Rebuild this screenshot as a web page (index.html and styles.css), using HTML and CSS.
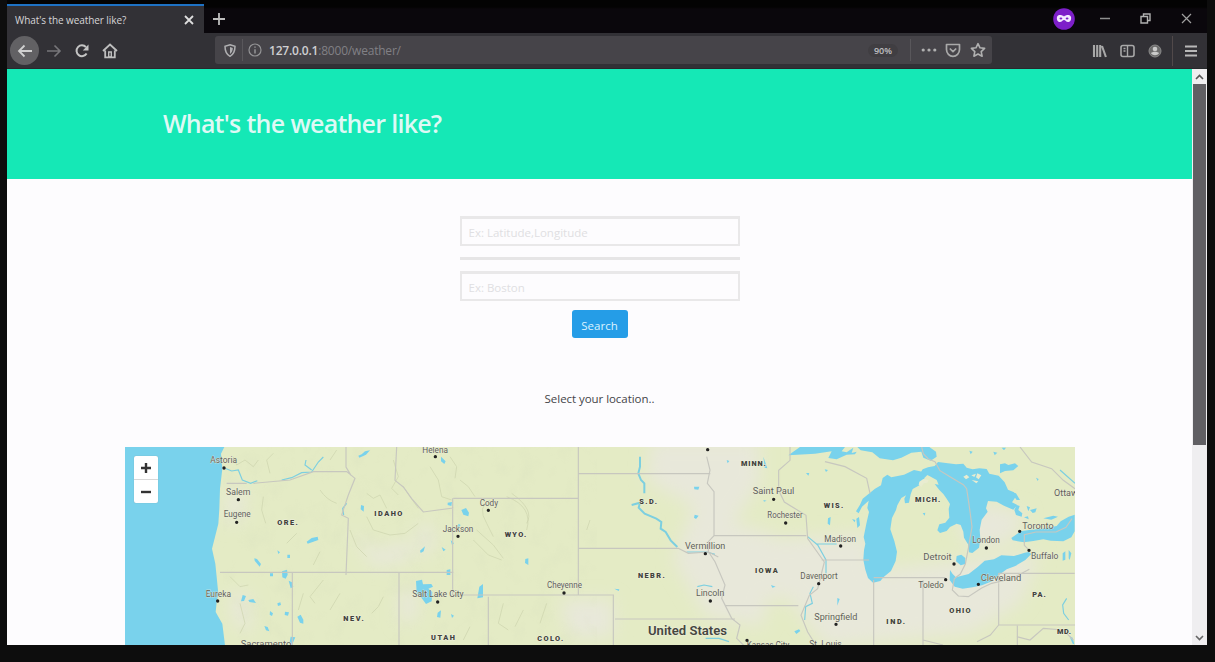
FILE: index.html
```html
<!DOCTYPE html>
<html lang="en">
<head>
<meta charset="utf-8">
<title>What's the weather like?</title>
<link rel="stylesheet" href="styles.css">
</head>
<body>
<div class="browser">
  <div class="tabbar">
    <div class="tab"><span class="tab-title">What's the weather like?</span>
      <svg class="tab-close" width="10" height="10" viewBox="0 0 10 10"><path d="M1 1l8 8M9 1l-8 8" stroke="#dedede" stroke-width="1.8"/></svg>
    </div>
    <svg class="newtab" width="14" height="14" viewBox="0 0 14 14"><path d="M7 1v12M1 7h12" stroke="#bdbdbd" stroke-width="1.8"/></svg>
    <div class="window-controls">
      <svg width="24" height="24" viewBox="0 0 24 24"><circle cx="12" cy="12" r="10.8" fill="#7d1fc9"/><path d="M5 10c1-3 5-2 7-.6 2-1.400 6-2.400 7 .6.600 3-1 5-3 5s-2.500-2-4-2-2 2-4 2-3.600-2-3-5z" fill="#f3eaff"/><ellipse cx="8.900" cy="11.500" rx="1.400" ry="1.100" fill="#7d1fc9"/><ellipse cx="15.100" cy="11.500" rx="1.400" ry="1.100" fill="#7d1fc9"/></svg>
      <svg class="win-min" width="10" height="10" viewBox="0 0 10 10"><path d="M0 4.500h10" stroke="#8f8f8f" stroke-width="1.500"/></svg>
      <svg class="win-max" width="11" height="11" viewBox="0 0 11 11"><path d="M1 3.500h6.500V10H1zM3.500 3V1H10v6.500H8" fill="none" stroke="#b0b0b0" stroke-width="1.400"/></svg>
      <svg class="win-close" width="11" height="11" viewBox="0 0 11 11"><path d="M1 1l9 9M10 1l-9 9" stroke="#a0a0a0" stroke-width="1.200"/></svg>
    </div>
  </div>
  <div class="toolbar">
    <div class="nav">
      <span class="back"><svg width="16" height="14" viewBox="0 0 16 14"><path d="M15 7H2M7.500 1.500L2 7l5.500 5.500" fill="none" stroke="#d0d0d0" stroke-width="1.800"/></svg></span>
      <svg class="forward" width="16" height="14" viewBox="0 0 16 14"><path d="M1 7h13M8.500 1.500L14 7l-5.500 5.500" fill="none" stroke="#77767a" stroke-width="1.600"/></svg>
      <svg class="reload" width="16" height="16" viewBox="0 0 16 16"><path d="M12.600 10.500A5.400 5.400 0 1 1 12 4.200" fill="none" stroke="#c4c4c4" stroke-width="2"/><path d="M14.500 1.500v6H8.800z" fill="#c4c4c4"/></svg>
      <svg class="home" width="16" height="16" viewBox="0 0 16 16"><path d="M1 8l7-6.500L15 8M3.200 7.500v6.800h9.600V7.500" fill="none" stroke="#bebebe" stroke-width="1.800"/><path d="M6.700 14V9h2.600v5z" fill="none" stroke="#bebebe" stroke-width="1.400"/></svg>
    </div>
    <div class="urlbar">
      <svg class="shield" width="12" height="13" viewBox="0 0 12 13"><path d="M6 .8l5 1.500c0 5-1 8-5 10-4-2-5-5-5-10z" fill="none" stroke="#b0b0b2" stroke-width="1.500"/><path d="M6 3v7c2-1.500 2.700-3.500 2.800-6z" fill="#b0b0b2"/></svg>
      <span class="divider"></span>
      <svg class="info" width="14" height="14" viewBox="0 0 14 14"><circle cx="7" cy="7" r="6" fill="none" stroke="#949496" stroke-width="1.200"/><path d="M7 3.500v1.300M7 6.200v4.300" stroke="#949496" stroke-width="1.500"/></svg>
      <span class="url"><b>127.0.0.1</b>:8000/weather/</span>
      <span class="zoom">90%</span>
      <span class="divider page-divider"></span>
      <svg class="dots" width="16" height="4" viewBox="0 0 16 4"><g fill="#b0b0b0"><circle cx="2.200" cy="2" r="1.600"/><circle cx="8" cy="2" r="1.600"/><circle cx="13.800" cy="2" r="1.600"/></g></svg>
      <svg class="pocket" width="16" height="15" viewBox="0 0 16 15"><path d="M1.500 1.500h13v5a6.500 6.800 0 0 1-13 0zM4.800 5.500L8 8.700l3.200-3.200" fill="none" stroke="#a9a9a9" stroke-width="1.700" stroke-linejoin="round"/></svg>
      <svg class="star" width="16" height="16" viewBox="0 0 16 16"><path d="M8 1.600l2 4.200 4.600.6-3.400 3.200.9 4.600L8 12l-4.100 2.200.9-4.600L1.400 6.400 6 5.800z" fill="none" stroke="#b0b0b0" stroke-width="1.600" stroke-linejoin="round"/></svg>
    </div>
    <div class="tools">
      <svg width="15" height="14" viewBox="0 0 15 14"><path d="M2 1v12M5.200 1v12M8.200 1v12M10 2l3.900 11" stroke="#a8a8a8" stroke-width="2.100"/></svg>
      <svg width="15" height="14" viewBox="0 0 15 14"><rect x="1" y="1.500" width="13" height="11" rx="2" fill="none" stroke="#a8a8a8" stroke-width="1.600"/><path d="M7.500 2v10M3.500 4.500h2M3.500 7h2" stroke="#a8a8a8" stroke-width="1.400"/></svg>
      <svg width="14" height="14" viewBox="0 0 14 14"><circle cx="7" cy="7" r="6" fill="#6c6c6c" stroke="#8a8a8a"/><circle cx="7" cy="5" r="2.300" fill="#cacaca"/><path d="M3 9.300c1-2 7-2 8 0-1.500 2.500-6.500 2.500-8 0z" fill="#cacaca"/></svg>
      <span class="divider tool-divider"></span>
      <svg class="menu" width="12" height="12" viewBox="0 0 12 12"><path d="M0 1.500h12M0 6h12M0 10.500h12" stroke="#b8b8b8" stroke-width="1.900"/></svg>
    </div>
  </div>
  <div class="viewport">
    <main class="page">
      <header class="hero"><h1>What's the weather like?</h1></header>
      <form class="search">
        <input type="text" placeholder="Ex: Latitude,Longitude">
        <hr>
        <input type="text" placeholder="Ex: Boston">
        <button type="button">Search</button>
      </form>
      <p class="hint">Select your location..</p>
      <div class="map">
        <svg class="map-canvas" width="950" height="198" viewBox="45 51 2850 594">
          <defs>
            <filter id="soft" x="-30%" y="-30%" width="160%" height="160%"><feGaussianBlur stdDeviation="26"/></filter>
            <filter id="ridge" x="0" y="0" width="100%" height="100%"><feTurbulence type="fractalNoise" baseFrequency=".018 .014" numOctaves="3" seed="8"/><feColorMatrix values="0 0 0 0 .68  0 0 0 0 .73  0 0 0 0 .51  2.400 0 0 0 -1.150"/></filter>
          </defs>
          <rect x="45" y="51" width="2850" height="594" fill="#e4ebc5"/>
          <g fill="#e8e8da" filter="url(#soft)">
            <path d="M1620 30h330v130l-80 120 120 30-30 280-170-30-100-170 60-160-140-80z"/>
            <path d="M1350 510h160v110h-130z"/>
            <path d="M1940 330l330-20 20 110 500-50-60 150-150 90-430 40-120-150-100 20z"/>
            <path d="M2540 280l80-60 130 30-50 90-120 10z"/>
            <path d="M720 300l80 60 110-30-10 60-110 20zM870 480l50-10v100l-50 10zM920 290l50-10v80l-40 20z"/>
            <path d="M350 180h60l-20 100h-40zM360 480l60 20v120l-50-50z"/>
          </g>
          <rect x="340" y="51" width="1120" height="594" filter="url(#ridge)" opacity=".22"/>
          <g class="ridges">
            <path d="M370 80l10 25 25-15 25 20 15-20M460 200l-5 40 12 40M630 180q20 30 50 40M660 90l20-30M770 190l20 15 20-10 20 40M850 90l15 50-20 35 20 20M880 170l20 30 25 35M770 260l20 40 50 15 45-5 40-30M720 300l20 50 30 30M630 365l-20 40M580 490l-15 50M640 450l-40 50 15 20M690 490l-30 50M820 500l-15 30-20 20M390 520l15 60-15 30M360 440l30 30 25-5M530 340l30-30M480 130l-10-40 20-20"/>
            <path d="M960 110l25 40 10 50 30 10M1020 80l20 30-5 35M1050 150l25 20 20 30M1140 210q-40 20-10 70l20 40M1190 200q80 30 60 100M1205 190q70 50 45 90M1100 300l50 45 30 40M1090 330l45 45 40 15M1180 520l-15 60 30 20M1240 540l-25 50M1310 520l-20 60M1080 590l-20 40M1440 270l-10 30"/>
          </g>
          <g fill="#79d2ec">
            <path d="M45 51h298l-10 20 4 45-7 60-2 60-3 45-10 40-9 35 10 45 4 40 5 50-5 25-3 30 20 35 8 65H45z"/>
            <path d="M590 335l15-11 18-4 2 10-32 11zM433 385l8 2 12 15-4 8-15-18zM516 424l15-5 2 15-6 12-10-4zM536 452l10 5 4 13-8 5zM480 430h9v9h-9zM532 374h8v10h-8zM415 510l15-3 8 12-20-3zM502 520l9-3 2 8-9 3zM525 545l12 2-3 10-10-2zM480 543l9 7-3 8-7-4zM562 560l10-6 8 15v12l-10-3zM463 588l10 3 5 13-10-3zM542 620l14 2-10 23-8-3zM502 361l8 6-5 5zM753 225l9 3-1 17-9-7zM930 362l15-13-4 15-9 5zM745 77l10-4 10-9 15-3-12 13-20 9zM398 495l10 3-6 15-9 1z"/>
            <path d="M918 453l18-4 3 14 25-1 5 8-14 6 12 10-2 28-17 8-15-20-13-13zM983 548l10-7-2 22-10-2zM993 80l14 14-4 8-10-8zM1054 240l14-6 9 14-2 11-15-5zM1010 420l11-2v17h-11zM1108 470l11-8v40l-17 3zM1246 387l9-2v20l-10-6zM995 351l12 8-7 5zM1022 330l10 10-6 5zM1023 552l9 5-6 7zM1013 218l13-2-2 12-11-3zM1045 281l7 4-7 9zM1752 170l16 0-3 9-12-1zM1754 254l12 3-8 10-6-4zM1513 476l15 2-2 5zM1850 90l8 3-5 7z"/>
            <path d="M2035 76l35-25h135l-10 13 15 3 20-14-5 16 15-4-5 8-25 1-30 14-25-4 10-20-50 7z"/>
            <path d="M2242 51l10 10 35 6 22 18 40 6 25-8 30-15 30-3 6 18 22 9 18-12-2-15-20-14z"/>
            <g transform="translate(2250 48)">
              <path d="M45 128l18-10 5-22 14-10 12 8 38-8 30-14 18 4 25 8-12 12-2 15-18 10-15 8-6 16-5 25-12 2-2-14 5-10-14 8-12 22-4 14-12 24-5 34 12 35 8 32-4 28-14 30-22 18-10 12-22 5-15-14-8-25-6-30 2-28 4-20-5-20 8-40 8-35-5-12 4-22-20 18-10 20-8-6 12-20 8-18z"/>
              <path d="M183 78l25 12 22 12 6 14-12-2 14 18 12 12 10 14 10 16-4 15 2 26-12 15-18 5-6 18 8 8 20-6 10-12 20-10 12 4 8 20 2 18 12 20 3 24 10 2 20-16 4-26-2-28 6-30 18-24-5-10 6-22 26 2 22 12 28 12 12-14-16-8 12-18-6-12-18-8-10-22-18-20-28-6-8-14-22-2-20 3-18-5-10-12-22 2-24-3-30-4-10 12-20 4-16 6z"/>
              <path d="M270 372l8 12 10 10 38-10 28-22 20-18 28-4 22-12 38 2 32-10 12-2 8 6-18 18-30 18-26 10-24 18-20 18-30 12-28 6-30 4-24-6-15-20zM454 276l28-20 25-4 38-4 45-8 12-14 24-14 18-6v50l-10 18-24 12-38-2-22-4-30 5-28 4-34-6zM290 330l14-4 12 10v18l-14 4-14-12z"/>
            </g>
            <path d="M2670 103l15-3 10 5 20-5 10 8-15 13-25 2-15 7zM2703 187l15 3 12 20-10 0zM2720 225l9 3-4 12 12 10-2 10-17-5-5-15zM2750 228l10 4-5 12zM2760 240l20-5-4 12-8 2zM2742 262l12-3 2 9zM2154 265l8-4-2 25-7-5zM2239 266l8-5 3 25-8 8zM2226 267l10 3-2 7zM2088 129l10 0-3 8zM2144 118l10 2-6 6zM2438 250l8-2-2 9zM2650 65l12 3-8 8zM2675 53l13 0-6 8zM2578 62l10 3-6 8zM2778 143l8 4-3 6zM1983 465l14 5-10 3zM2182 504l7 3-7 20zM2053 604l14-6 4 5-12 9zM2858 370l8-6v25l-8 3zM2876 360l8 10-5 20-3-5zM2878 618l10 5 5 20-5-2zM1960 80l12 35-8-2zM1960 210l10 2-8 3zM2800 265l30-8 14 3-20 9z"/>
          </g>
          <g fill="#e9ecd0"><path d="M2428 155l12-8 16 3-4 8-10 2-8 10-8-5zM2560 140l10-6 8 8-10 6zM2584 136l14-5-5 10zM2602 130l12 6-8 12-8-6zM2585 150l20 4-6 6z"/></g>
          <g class="rivers">
            <path d="M345 115l20 8 20-3 12 30 25 10 20-8M515 150l30-7 30-15 30-2 20-30 15-15M605 120l-20-15 3-15M710 220l-12 15 3 20"/>
            <path stroke-width="6" d="M1590 80v30l-5 20 8 20 10 10v30M1565 225l25-7-4 15 18 18 35 15 15 10-2 20 15 10 15 25 20 20"/>
            <path d="M1730 366h60l25 7M1762 470l20-5 25 5M1787 625h40l30 10M2093 320l30 25 25 45v40M2110 470l-10 20 7 30-20 10-3 40M2870 505l-12 20 3 25 15 20M2120 342h60M2850 120l45 40"/>
          </g>
          <g class="borders">
            <path d="M350 160h60M430 160l110-10 70-25h100l25 20-20 50-20 60 20 10-7 170M330 427h700M547 427v218M708 51v60l15 25M867 427v218"/>
            <path d="M860 51l-5 100 25 20 25 35 35 40 90-12M1030 205h375M1028 205v290M1028 495h484M1405 51v445M1405 131h396M1405 355h300l30 15 60-4 30 15M1135 500v145M1510 495v150M1515 567h360M1845 527h220"/>
            <path d="M1790 80l10 40-8 40 20 25v132l-17 18 0 30 20 30 30 70-10 40 30 60 25 20-10 40 25 25M1812 317h277M2040 51v40l-34 30v60l17 35 65 40 5 70 50 70-20 80-25 20-25 60 20 50 25 40M2135 390h142M2291 450v195M2291 443h215M2439 450v195M2439 630l60 15M2666 460v125h230M2666 430v28M2666 430h228M2666 585l-25 30-40 20M2722 587v58M2720 620l40 10 40-35 60 5 30 30"/>
            <path d="M2145 95l60 15 65 35 10 45"/>
            <path d="M2435 51l5 20 15 16 20 8 15 27 30 18 40 24 10 12 8 54 8 60-10 60-10 52-15 30-18 14-6 34 18 18 30 2 40-26 30-14 60-14 53-28M2755 358l-12-12v-32l35-8h60l30-14 18-26M2730 51l35 45 60 20 35 35 35 25"/>
          </g>
          <g class="cities">
            <text x="301" y="99" textLength="80" lengthAdjust="spacingAndGlyphs">Astoria</text><text x="348" y="194" textLength="73" lengthAdjust="spacingAndGlyphs">Salem</text><text x="341" y="262" textLength="81" lengthAdjust="spacingAndGlyphs">Eugene</text><text x="287" y="500" textLength="76" lengthAdjust="spacingAndGlyphs">Eureka</text><text x="392" y="650" textLength="152" lengthAdjust="spacingAndGlyphs">Sacramento</text>
            <text x="937" y="68" textLength="77" lengthAdjust="spacingAndGlyphs">Helena</text><text x="1109" y="227" textLength="55" lengthAdjust="spacingAndGlyphs">Cody</text><text x="998" y="305" textLength="92" lengthAdjust="spacingAndGlyphs">Jackson</text><text x="907" y="501" textLength="154" lengthAdjust="spacingAndGlyphs">Salt Lake City</text><text x="1311" y="475" textLength="105" lengthAdjust="spacingAndGlyphs">Cheyenne</text><text x="1725" y="356" textLength="121" lengthAdjust="spacingAndGlyphs">Vermillion</text><text x="1758" y="498" textLength="85" lengthAdjust="spacingAndGlyphs">Lincoln</text>
            <text x="1928" y="193" textLength="125" lengthAdjust="spacingAndGlyphs">Saint Paul</text><text x="1972" y="265" textLength="106" lengthAdjust="spacingAndGlyphs">Rochester</text><text x="2143" y="335" textLength="95" lengthAdjust="spacingAndGlyphs">Madison</text><text x="2071" y="448" textLength="112" lengthAdjust="spacingAndGlyphs">Davenport</text><text x="2113" y="570" textLength="129" lengthAdjust="spacingAndGlyphs">Springfield</text><text x="2098" y="651" textLength="97" lengthAdjust="spacingAndGlyphs">St. Louis</text><text x="2440" y="391" textLength="85" lengthAdjust="spacingAndGlyphs">Detroit</text><text x="2425" y="475" textLength="76" lengthAdjust="spacingAndGlyphs">Toledo</text><text x="2612" y="454" textLength="122" lengthAdjust="spacingAndGlyphs">Cleveland</text><text x="2587" y="340" textLength="82" lengthAdjust="spacingAndGlyphs">London</text><text x="2737" y="296" textLength="94" lengthAdjust="spacingAndGlyphs">Toronto</text><text x="2763" y="387" textLength="82" lengthAdjust="spacingAndGlyphs">Buffalo</text><text x="2832" y="199">Ottawa</text><text x="1910" y="655" textLength="128" lengthAdjust="spacingAndGlyphs">Kansas City</text>
          </g>
          <g class="states">
            <text x="502" y="285" textLength="61">ORE.</text><text x="793" y="258" textLength="84">IDAHO</text><text x="700" y="572" textLength="61">NEV.</text><text x="963" y="629" textLength="72">UTAH</text><text x="1184" y="321" textLength="65">WYO.</text><text x="1282" y="634" textLength="78">COLO.</text><text x="1588" y="222" textLength="53">S.D.</text><text x="1584" y="444" textLength="80">NEBR.</text><text x="1893" y="108" textLength="74">MINN.</text><text x="2141" y="235" textLength="59">WIS.</text><text x="2415" y="217" textLength="76">MICH.</text><text x="1935" y="429" textLength="68">IOWA</text><text x="2329" y="583" textLength="56">IND.</text><text x="2518" y="548" textLength="64">OHIO</text><text x="2767" y="500" textLength="40">PA.</text><text x="2841" y="613" textLength="42">MD.</text>
          </g>
          <text class="country" x="1614" y="614" textLength="237" lengthAdjust="spacingAndGlyphs">United States</text>
          <path class="dots-layer" d="M342 114h.1M385 209h.1M380 277h.1M323 513h.1M976 80h.1M1135 241h.1M1044 319h.1M983 516h.1M1362 489h.1M1793 59h.1M1786 371h.1M1801 513h.1M1911 631h.1M1991 208h.1M2027 279h.1M2192 348h.1M2126 461h.1M2178 583h.1M2532 402h.1M2507 449h.1M2605 463h.1M2629 354h.1M2729 304h.1M2757 361h.1"/>
        </svg>
        <div class="map-zoom">
          <button type="button"><svg width="12" height="12" viewBox="0 0 12 12"><path d="M6 1v10M1 6h10" stroke="#333" stroke-width="2.400"/></svg></button>
          <button type="button"><svg width="12" height="12" viewBox="0 0 12 12"><path d="M1 6h10" stroke="#333" stroke-width="2.400"/></svg></button>
        </div>
      </div>
    </main>
    <div class="scrollbar">
      <span class="arrow"><svg width="9" height="6" viewBox="0 0 9 6"><path d="M1 5l3.500-3.500L8 5" fill="none" stroke="#555" stroke-width="1.600"/></svg></span>
      <span class="thumb"></span>
      <span class="arrow down"><svg width="9" height="6" viewBox="0 0 9 6"><path d="M1 1l3.500 3.500L8 1" fill="none" stroke="#666" stroke-width="1.600"/></svg></span>
    </div>
  </div>
</div>
</body>
</html>
```
FILE: styles.css
```css
* { box-sizing: border-box; }
body { margin: 0; width: 1215px; height: 662px; overflow: hidden; background: #0d0d0d; font-family: "Open Sans", "Noto Sans", sans-serif; padding: 0 8px 17px 7px; }
.browser { height: 645px; background: #070509; display: flex; flex-direction: column; overflow: hidden; }
.tabbar { height: 33px; padding-top: 4px; display: flex; align-items: stretch; background: linear-gradient(#030303 7px, #0a070c 9px); flex: none; }
.tab { width: 197px; background: #323136; border-top: 2px solid #1e72c4; display: flex; align-items: center; justify-content: space-between; padding: 0 10px 0 8px; }
.tab-title { font-size: 10px; color: #d6d6d8; letter-spacing: -.08px; white-space: nowrap; }
.newtab { margin: 8px 0 0 8px; }
.window-controls { display: flex; align-items: center; margin-left: auto; padding: 0 15px 0 0; height: 29px; }
.win-min { margin-left: 24px; }
.win-max { margin-left: 30px; }
.win-close { margin-left: 30px; }
.toolbar { height: 36px; flex: none; background: #323136; border-bottom: 1px solid #272a2c; display: flex; align-items: center; }
.nav { width: 208px; display: flex; align-items: center; padding-left: 3px; }
.back { width: 29px; height: 29px; border-radius: 50%; background: #626164; display: grid; place-items: center; }
.forward { margin-left: 7px; }
.reload { margin-left: 12px; }
.home { margin-left: 12px; }
.urlbar { width: 777px; height: 28px; background: #464449; border-radius: 3px; display: flex; align-items: center; padding-left: 9px; margin-top: -1px; }
.divider { width: 1px; height: 22px; background: #59575b; margin-left: 6px; }
.info { margin-left: 5px; }
.url { font-size: 12px; color: #818085; margin-left: 7px; letter-spacing: -.2px; white-space: nowrap; padding-top: 1px; }
.url b { color: #cfcfd1; font-weight: 600; }
.zoom { margin-left: auto; width: 30px; text-align: center; font-size: 9px; font-weight: 600; color: #c0c0c4; background: #403e42; border-radius: 8px; margin-right: -2px; }
.page-divider { margin-left: 14px; }
.dots { margin-left: 10px; }
.pocket { margin-left: 8px; }
.star { margin: 0 6px 0 9px; }
.tools { margin-left: auto; display: flex; align-items: center; padding-right: 10px; gap: 13px; }
.tool-divider { height: 30px; margin: 0 -1px 0 -3px; background: #51494a; }
.viewport { flex: 1; display: flex; min-height: 0; background: #fdfcfe; }
.page { width: 1185px; overflow: hidden; display: flex; flex-direction: column; align-items: center; }
.hero { width: 100%; height: 110px; flex: none; background: #15e8b6; padding: 36px 0 0 156px; }
.hero h1 { margin: 0; font-size: 25px; line-height: 36px; font-weight: 600; color: #def9f5; letter-spacing: -.8px; word-spacing: .5px; white-space: nowrap; }
.search { width: 280px; display: flex; flex-direction: column; align-items: center; margin-top: 37px; flex: none; }
.search input { width: 100%; height: 30px; border: 2px solid #e9e8e9; border-top-width: 3px; background: #fdfcfe; font: 11.5px "Open Sans", sans-serif; padding: 1px 7px 0; }
.search input::placeholder { color: #e0dfe2; opacity: 1; }
.search hr { width: 100%; height: 3px; border: 0; background: #e6e5e6; margin: 11px 0; }
.search button { width: 56px; height: 28px; border: 0; border-radius: 3px; background: #259de7; color: #dbf3ff; font: 11.5px "Open Sans", sans-serif; margin-top: 9px; padding: 2px 0 0; }
.hint { margin: 52px 0 0; height: 18px; line-height: 18px; font-size: 11.5px; letter-spacing: -.05px; color: #444448; flex: none; }
.map { position: relative; width: 950px; height: 198px; margin-top: 39px; flex: none; overflow: hidden; }
.map-canvas { display: block; }
.map-canvas text { font-family: Roboto, sans-serif; }
.ridges { fill: none; stroke: #c9d0aa; stroke-width: 3; opacity: .6; }
.borders { fill: none; stroke: #c7c7bf; stroke-width: 3.500; }
.rivers { fill: none; stroke: #7ccfe0; stroke-width: 3.500; }
.cities { font-size: 27px; fill: #5f605a; stroke: #eef0dc; stroke-width: 2px; paint-order: stroke; }
.states { font-size: 22px; font-weight: 900; fill: #41423c; stroke: #eef0dc; stroke-width: 3px; paint-order: stroke; }
.country { font-size: 38px; font-weight: 600; fill: #45463f; stroke: #eef0dc; stroke-width: 3px; paint-order: stroke; }
.dots-layer { stroke: #222; stroke-width: 10; stroke-linecap: round; }
.map-zoom { position: absolute; left: 9px; top: 9px; width: 24px; height: 47px; background: #fff; border-radius: 2px; box-shadow: 0 0 1px #7899a3; }
.map-zoom button { display: grid; place-items: center; width: 24px; height: 24px; border: 0; border-bottom: 1px solid #d8d8d8; background: none; padding: 0; }
.map-zoom button + button { height: 23px; border: 0; }
.scrollbar { width: 15px; background: #efeef0; display: flex; flex-direction: column; }
.arrow { height: 15px; display: grid; place-items: center; }
.thumb { height: 361px; width: 13px; margin-left: 1px; background: #605f63; }
.down { margin-top: auto; }
```
